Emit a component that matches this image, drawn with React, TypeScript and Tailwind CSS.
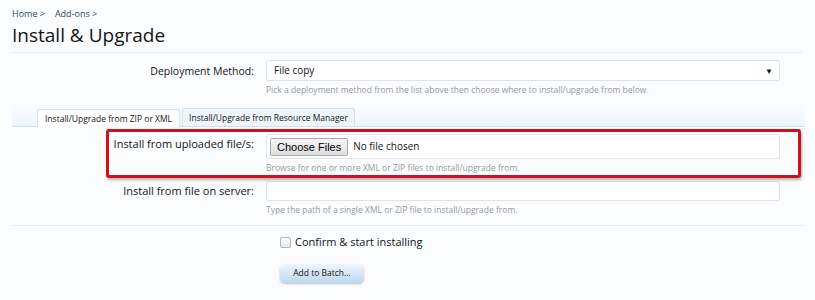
export default function App() {
	const font = { fontFamily: '"Trebuchet MS", "Open Sans", "Liberation Sans", sans-serif' };

	return (
		<div className="w-[815px] h-[300px] overflow-hidden bg-[#fbfcfe] text-[#141414]" style={font}>
			<div className="px-3 pt-[8px]">
				{/* Breadcrumb */}
				<div className="flex gap-[10px] text-[9px] text-[#2b485c] leading-[12px]">
					<span>Home &gt;</span>
					<span>Add-ons &gt;</span>
				</div>
				<h1 className="text-[19px] leading-[26px] mt-[2px]">Install &amp; Upgrade</h1>
				<div className="h-px bg-[#e6eef4] mt-[4px] w-[790px]" />

				{/* Deployment method */}
				<div className="grid grid-cols-[242px_514px] gap-x-[12px] mt-[7px]">
					<label className="text-right text-[10.5px] leading-[20px] pt-[1px] text-[#141414]">Deployment Method:</label>
					<div>
						<div className="h-[21px] border border-[#dfe3e8] rounded-[2px] bg-white flex items-center justify-between pl-[7px] pr-[6px] text-[10px]">
							<span>File copy</span>
							<span className="text-[8px]">▼</span>
						</div>
						<p className="text-[8.5px] text-[#999] mt-[3px] leading-[12px]">
							Pick a deployment method from the list above then choose where to install/upgrade from below.
						</p>
					</div>
				</div>

				{/* Tabs */}
				<div className="mt-[6px] h-[25px] bg-gradient-to-b from-[#fbfcfe] to-[#eef5fb] border-b border-[#cfe2ef] flex items-end pl-[25px] gap-[2px] w-[793px]">
					<div className="h-[18px] px-[7px] bg-white border border-b-0 border-[#cfe2ef] rounded-t-[3px] text-[8.5px] leading-[17px] -mb-px">
						Install/Upgrade from ZIP or XML
					</div>
					<div className="h-[18px] px-[6px] bg-[#eef6fb] border border-b-0 border-[#cfe2ef] rounded-t-[3px] text-[8.5px] leading-[17px]">
						Install/Upgrade from Resource Manager
					</div>
				</div>

				{/* Upload row with highlight */}
				<div className="relative mt-[7px]">
					<div className="absolute left-[94px] top-[-5px] w-[695px] h-[49px] border-[3px] border-[#d0101b] rounded-[3px] shadow-[1px_2px_3px_rgba(0,0,0,0.3)] pointer-events-none" />
					<div className="grid grid-cols-[242px_514px] gap-x-[12px]">
						<label className="text-right text-[11px] leading-[20px] text-[#141414]">Install from uploaded file/s:</label>
						<div>
							<div className="h-[25px] border border-[#dfe3e8] rounded-[2px] bg-white flex items-center pl-[3px] gap-[5px]">
								<span
									className="h-[18px] px-[6px] border border-[#a9a9a9] rounded-[2px] bg-gradient-to-b from-[#f6f6f6] to-[#dedede] text-[11px] leading-[16px] text-black"
									style={{ fontFamily: '"Liberation Sans", Arial, sans-serif' }}
								>
									Choose Files
								</span>
								<span className="text-[10px]">No file chosen</span>
							</div>
							<p className="text-[8.5px] text-[#999] mt-[3px] leading-[12px]">
								Browse for one or more XML or ZIP files to install/upgrade from.
							</p>
						</div>
					</div>
				</div>

				{/* Server file row */}
				<div className="grid grid-cols-[242px_514px] gap-x-[12px] mt-[7px]">
					<label className="text-right text-[11px] leading-[20px] text-[#141414]">Install from file on server:</label>
					<div>
						<div className="h-[20px] border border-[#dfe3e8] rounded-[2px] bg-white" />
						<p className="text-[8.5px] text-[#999] mt-[3px] leading-[12px]">
							Type the path of a single XML or ZIP file to install/upgrade from.
						</p>
					</div>
				</div>
				<div className="h-px bg-[#e6eef4] mt-[9px] w-[793px]" />

				{/* Submit area */}
				<div className="pl-[268px] pt-[8px]">
					<label className="flex items-center gap-[4px] text-[11px]">
						<span className="w-[11px] h-[11px] border border-[#b5b5b5] rounded-[2px] bg-gradient-to-b from-white to-[#e8e8e8]" />
						<span>Confirm &amp; start installing</span>
					</label>
					<button className="mt-[13px] h-[19px] w-[84px] rounded-[5px] bg-gradient-to-b from-[#eef6fc] to-[#bcd8ee] shadow-[0_1px_2px_rgba(0,0,0,0.25)] text-[8.5px] text-[#141414]">
						Add to Batch...
					</button>
				</div>
			</div>
		</div>
	);
}
